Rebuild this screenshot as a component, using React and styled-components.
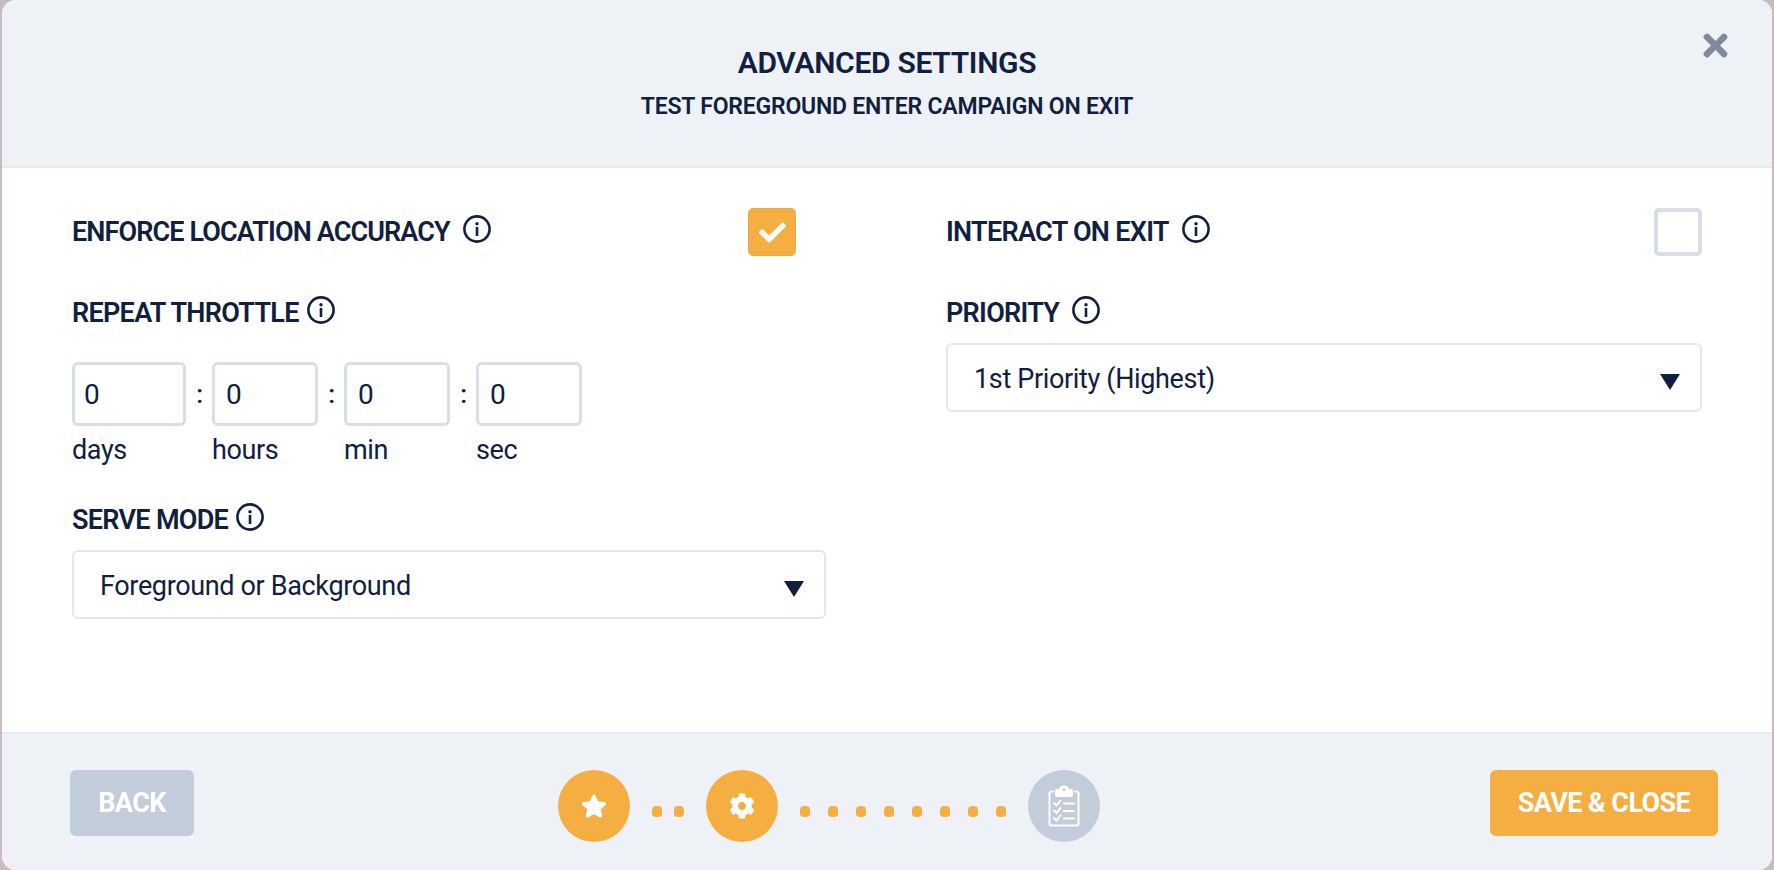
import styled, { createGlobalStyle } from "styled-components";
import { FaCheck, FaCog, FaStar, FaTimes } from "react-icons/fa";

const GlobalStyle = createGlobalStyle`
  html, body {
    margin: 0;
    padding: 0;
    background: #c8bcbc;
  }
  * {
    box-sizing: border-box;
  }
`;

const InfoIcon = () => (
  <Info viewBox="0 0 28 28">
    <circle cx="14" cy="14" r="12.6" fill="none" stroke="#10203f" strokeWidth="2.6" />
    <circle cx="14" cy="8.8" r="1.7" fill="#10203f" />
    <rect x="12.7" y="12" width="2.6" height="9" fill="#10203f" />
  </Info>
);

const ClipboardIcon = () => (
  <svg width="32" height="42" viewBox="0 0 32 42" fill="none" stroke="#fff" strokeWidth="2" strokeLinecap="round">
    <path d="M5 6.500H3.500A2 2 0 0 0 1.500 8.500V38.500A2 2 0 0 0 3.500 40.500H28.500A2 2 0 0 0 30.500 38.500V8.500A2 2 0 0 0 28.500 6.500H27" />
    <path d="M8 10V6A1 1 0 0 1 9 5H11.800A4.300 4.300 0 0 1 20.200 5H23A1 1 0 0 1 24 6V10A1 1 0 0 1 23 11H9A1 1 0 0 1 8 10Z" fill="#fff" />
    <circle cx="16" cy="4.800" r="1.500" fill="#c3ccda" stroke="none" />
    <path d="M6 18L8.500 20.500L12.500 15.500" />
    <path d="M6 25.500L8.500 28L12.500 23" />
    <path d="M6 33L8.500 35.500L12.500 30.500" />
    <path d="M16 18.500H26" />
    <path d="M16 26H26" />
    <path d="M16 33.500H26" />
  </svg>
);

const timeParts = [
  { label: "days", wide: true },
  { label: "hours" },
  { label: "min" },
  { label: "sec" },
];

const Dots = ({ count, gap }) => (
  <DotRow $gap={gap}>
    {Array.from({ length: count }).map((_, i) => (
      <Dot key={i} />
    ))}
  </DotRow>
);

const App = () => {
  return (
    <>
      <GlobalStyle />
      <Modal>
        <Header>
          <Title>ADVANCED SETTINGS</Title>
          <Subtitle>TEST FOREGROUND ENTER CAMPAIGN ON EXIT</Subtitle>
          <CloseButton>
            <FaTimes />
          </CloseButton>
        </Header>

        <Body>
          <Column>
            <ToggleRow $inset={30}>
              <Label $gap={13} $tight>
                ENFORCE LOCATION ACCURACY <InfoIcon />
              </Label>
              <CheckBox $checked>
                <FaCheck />
              </CheckBox>
            </ToggleRow>

            <Label $top={41}>
              REPEAT THROTTLE <InfoIcon />
            </Label>
            <TimeRow>
              {timeParts.map((part, i) => (
                <TimeCell key={part.label}>
                  <TimeInput $wide={part.wide} readOnly value="0" />
                  <TimeLabel>{part.label}</TimeLabel>
                  {i < timeParts.length - 1 && <Colon>:</Colon>}
                </TimeCell>
              ))}
            </TimeRow>

            <Label $top={37}>
              SERVE MODE <InfoIcon />
            </Label>
            <Select>
              Foreground or Background
              <Arrow />
            </Select>
          </Column>

          <Column>
            <ToggleRow>
              <Label $gap={13}>
                INTERACT ON EXIT <InfoIcon />
              </Label>
              <CheckBox />
            </ToggleRow>

            <Label $top={41} $gap={13}>
              PRIORITY <InfoIcon />
            </Label>
            <Select>
              1st Priority (Highest)
              <Arrow />
            </Select>
          </Column>
        </Body>

        <Footer>
          <Button $muted>BACK</Button>
          <Stepper>
            <Step $done>
              <FaStar />
            </Step>
            <Dots count={2} gap={12} />
            <Step $done>
              <FaCog />
            </Step>
            <Dots count={8} gap={18} />
            <Step>
              <ClipboardIcon />
            </Step>
          </Stepper>
          <Button $wide>SAVE &amp; CLOSE</Button>
        </Footer>
      </Modal>
    </>
  );
};

const Modal = styled.div`
  width: 1770px;
  height: 870px;
  margin: 0 2px;
  display: flex;
  flex-direction: column;
  background: #fff;
  border-radius: 14px;
  overflow: hidden;
  color: #10203f;
  font-family: "Roboto", "Liberation Sans", sans-serif;
`;

const Header = styled.header`
  position: relative;
  height: 168px;
  flex: none;
  padding-top: 46px;
  background: #eef1f6;
  border-bottom: 2px solid #e4e8f0;
  text-align: center;
`;

const Title = styled.h1`
  margin: 0;
  font-size: 30px;
  line-height: 34px;
  font-weight: 600;
  letter-spacing: -0.3px;
`;

const Subtitle = styled.h2`
  margin: 14px 0 0;
  font-size: 23px;
  line-height: 26px;
  font-weight: 600;
  letter-spacing: -0.2px;
`;

const CloseButton = styled.div`
  position: absolute;
  top: 28px;
  right: 39px;
  display: flex;
  font-size: 35px;
  color: #7f8a9c;
`;

const Body = styled.main`
  flex: 1;
  display: grid;
  grid-template-columns: 754px 756px;
  column-gap: 120px;
  padding: 40px 0 0 70px;
`;

const Column = styled.section`
  display: flex;
  flex-direction: column;
  align-items: stretch;
`;

const ToggleRow = styled.div`
  display: flex;
  align-items: center;
  justify-content: space-between;
  height: 48px;
  padding-right: ${(p) => p.$inset || 0}px;
`;

const Label = styled.div`
  display: flex;
  align-items: center;
  gap: ${(p) => p.$gap || 8}px;
  margin-top: ${(p) => p.$top || 0}px;
  height: 32px;
  font-size: 27px;
  font-weight: 600;
  letter-spacing: ${(p) => (p.$tight ? -0.88 : -0.7)}px;
  white-space: nowrap;
`;

const Info = styled.svg`
  width: 28px;
  height: 28px;
  flex: none;
  margin-top: -6px;
`;

const CheckBox = styled.div`
  width: 48px;
  height: 48px;
  display: flex;
  align-items: center;
  justify-content: center;
  border-radius: 5px;
  font-size: 27px;
  color: #fff;
  background: ${(p) => (p.$checked ? "#f5ae41" : "#fff")};
  border: ${(p) => (p.$checked ? "1px solid #eda83e" : "4px solid #d6dee7")};
`;

const TimeRow = styled.div`
  display: flex;
  gap: 26px;
  margin-top: 33px;
`;

const TimeCell = styled.div`
  position: relative;
  display: flex;
  flex-direction: column;
`;

const TimeInput = styled.input`
  width: ${(p) => (p.$wide ? 114 : 106)}px;
  height: 64px;
  padding: 0 0 0 ${(p) => (p.$wide ? 9 : 11)}px;
  border: 3px solid #d6dee7;
  border-radius: 6px;
  outline: none;
  font-family: inherit;
  font-size: 28px;
  color: #10203f;
  background: #fff;
`;

const TimeLabel = styled.span`
  margin-top: 7px;
  font-size: 27px;
  line-height: 34px;
  letter-spacing: -0.4px;
`;

const Colon = styled.span`
  position: absolute;
  top: 15px;
  right: -17px;
  font-size: 26px;
  line-height: 34px;
  font-weight: 500;
`;

const Select = styled.div`
  display: flex;
  align-items: center;
  justify-content: space-between;
  height: 69px;
  margin-top: 14px;
  padding: 2px 20px 0 26px;
  border: 2px solid #e4e8ed;
  border-radius: 6px;
  font-size: 27px;
  letter-spacing: -0.35px;
`;

const Arrow = styled.span`
  width: 0;
  height: 0;
  margin-top: 6px;
  border-left: 10px solid transparent;
  border-right: 10px solid transparent;
  border-top: 16px solid #10203f;
`;

const Footer = styled.footer`
  height: 138px;
  flex: none;
  display: flex;
  align-items: flex-start;
  justify-content: space-between;
  padding: 36px 54px 0 68px;
  background: #eef1f6;
  border-top: 2px solid #e4e8f0;
`;

const Button = styled.button`
  width: ${(p) => (p.$wide ? 228 : 124)}px;
  height: 66px;
  padding: 0;
  border: none;
  border-radius: 6px;
  font-family: inherit;
  font-size: 27px;
  font-weight: 700;
  letter-spacing: -0.6px;
  color: #fff;
  background: ${(p) => (p.$muted ? "#c3ccda" : "#f5ae41")};
`;

const Stepper = styled.div`
  display: flex;
  align-items: center;
  gap: 22px;
  margin-right: 26px;
`;

const Step = styled.div`
  width: 72px;
  height: 72px;
  display: flex;
  align-items: center;
  justify-content: center;
  border-radius: 50%;
  font-size: 26px;
  color: #fff;
  background: ${(p) => (p.$done ? "#f5ae41" : "#c3ccda")};
`;

const DotRow = styled.div`
  display: flex;
  gap: ${(p) => p.$gap}px;
  margin-top: 10px;
`;

const Dot = styled.span`
  width: 10px;
  height: 11px;
  border-radius: 4px;
  background: #f5ae41;
`;

export default App;
